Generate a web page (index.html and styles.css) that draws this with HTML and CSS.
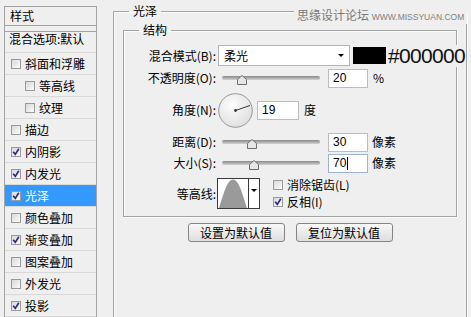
FILE: index.html
```html
<!DOCTYPE html>
<html lang="zh">
<head>
    <meta charset="UTF-8" />
    <title>图层样式 - 光泽</title>
    <link rel="stylesheet" href="styles.css">
</head>
<body>
<div class="page">
    <!-- style list on the left -->
    <div class="style-list">
        <div class="list-head">样式</div>
        <div class="list-blend">混合选项:默认</div>
        <div class="item"><span class="cb"></span>斜面和浮雕</div>
        <div class="item sub"><span class="cb"></span>等高线</div>
        <div class="item sub"><span class="cb"></span>纹理</div>
        <div class="item"><span class="cb"></span>描边</div>
        <div class="item"><span class="cb checked"><svg viewBox="0 0 10 10"><path d="M2.2 4.8 L4.3 7.4 L7.8 1.8"/></svg></span>内阴影</div>
        <div class="item"><span class="cb checked"><svg viewBox="0 0 10 10"><path d="M2.2 4.8 L4.3 7.4 L7.8 1.8"/></svg></span>内发光</div>
        <div class="item on"><span class="cb checked"><svg viewBox="0 0 10 10"><path d="M2.2 4.8 L4.3 7.4 L7.8 1.8"/></svg></span>光泽</div>
        <div class="item"><span class="cb"></span>颜色叠加</div>
        <div class="item"><span class="cb checked"><svg viewBox="0 0 10 10"><path d="M2.2 4.8 L4.3 7.4 L7.8 1.8"/></svg></span>渐变叠加</div>
        <div class="item"><span class="cb"></span>图案叠加</div>
        <div class="item"><span class="cb"></span>外发光</div>
        <div class="item"><span class="cb checked"><svg viewBox="0 0 10 10"><path d="M2.2 4.8 L4.3 7.4 L7.8 1.8"/></svg></span>投影</div>
    </div>

    <!-- satin settings -->
    <div class="panel">
        <fieldset class="group outer">
            <legend>光泽</legend>
            <fieldset class="group inner">
                <legend>结构</legend>

                <div class="row row-blend">
                    <span class="lbl">混合模式(B):</span>
                    <div class="select">柔光<span class="caret"></span></div>
                    <span class="swatch"></span>
                    <span class="hex">#000000</span>
                </div>

                <div class="row row-opacity">
                    <span class="lbl">不透明度(O):</span>
                    <div class="slider"><svg class="thumb" style="left:15px" viewBox="0 0 10 10"><path d="M5 0.5 L9.5 4.5 L9.5 9.5 L0.5 9.5 L0.5 4.5 Z"/></svg></div>
                    <span class="num">20</span>
                    <span class="unit">%</span>
                </div>

                <div class="row row-angle">
                    <span class="lbl">角度(N):</span>
                    <svg class="dial" viewBox="0 0 35 35">
                        <defs>
                            <radialGradient id="dialFill" cx="40%" cy="35%" r="70%">
                                <stop offset="0" stop-color="#fdfdfd"/>
                                <stop offset="1" stop-color="#dedede"/>
                            </radialGradient>
                        </defs>
                        <circle cx="17.5" cy="17.5" r="16.8" fill="url(#dialFill)" stroke="#8e8e8e" stroke-width="0.9"/>
                        <line x1="17.5" y1="17.5" x2="32" y2="12.5" stroke="#333" stroke-width="1"/>
                        <circle cx="17.5" cy="17.5" r="1.4" fill="#333"/>
                    </svg>
                    <span class="num wide">19</span>
                    <span class="unit">度</span>
                </div>

                <div class="row row-distance">
                    <span class="lbl">距离(D):</span>
                    <div class="slider"><svg class="thumb" style="left:25px" viewBox="0 0 10 10"><path d="M5 0.5 L9.5 4.5 L9.5 9.5 L0.5 9.5 L0.5 4.5 Z"/></svg></div>
                    <span class="num">30</span>
                    <span class="unit px">像素</span>
                </div>

                <div class="row row-size">
                    <span class="lbl">大小(S):</span>
                    <div class="slider"><svg class="thumb" style="left:27px" viewBox="0 0 10 10"><path d="M5 0.5 L9.5 4.5 L9.5 9.5 L0.5 9.5 L0.5 4.5 Z"/></svg></div>
                    <span class="num focus">70<i class="text-caret"></i></span>
                    <span class="unit px">像素</span>
                </div>

                <div class="row row-contour">
                    <span class="lbl">等高线:</span>
                    <div class="contour">
                        <svg class="curve" viewBox="0 0 30 29" preserveAspectRatio="none">
                            <path d="M1 29 C6 14 9 1 15 0.5 C21 1 24 14 29 29 Z" fill="#9a9a9a"/>
                        </svg>
                        <span class="contour-arrow"><span class="caret"></span></span>
                    </div>
                    <div class="checks">
                        <div class="check"><span class="cb"></span>消除锯齿(L)</div>
                        <div class="check"><span class="cb checked"><svg viewBox="0 0 10 10"><path d="M2.2 4.8 L4.3 7.4 L7.8 1.8"/></svg></span>反相(I)</div>
                    </div>
                </div>
            </fieldset>

            <div class="actions">
                <button class="btn">设置为默认值</button>
                <button class="btn">复位为默认值</button>
            </div>
        </fieldset>

        <div class="watermark">思缘设计论坛 <span>WWW.MISSYUAN.COM</span></div>
    </div>
</div>
</body>
</html>
```

FILE: styles.css
```css
body {
    margin: 0;
    height: 317px;
    overflow: hidden;
    background-color: #efefef;
    color: #000;
    font-family: "Noto Sans CJK SC", "Liberation Sans", sans-serif;
    font-size: 12px;
    line-height: 14px;
}
.page {
    display: flex;
    align-items: flex-start;
}

/* left style list */
.style-list {
    width: 93px;
    height: 330px;
    margin: 6px 0 0 4px;
    box-sizing: border-box;
    border: 1px solid #a3a3a3;
    border-bottom: none;
}
.list-head {
    height: 18px;
    line-height: 18px;
    padding-left: 5px;
    border-bottom: 1px solid #a3a3a3;
}
.list-blend {
    height: 20px;
    margin-top: 5px;
    padding-left: 4px;
    line-height: 14px;
    border-top: 1px solid #a3a3a3;
    border-bottom: 1px solid #d8d8d8;
}
.item {
    height: 21px;
    display: flex;
    align-items: center;
    gap: 4px;
    padding-left: 6px;
    border-bottom: 1px solid #d8d8d8;
}
.item.sub {
    padding-left: 20px;
}
.item.on {
    background-color: #3399ff;
    color: #fff;
}
.cb {
    flex: none;
    width: 10px;
    height: 10px;
    box-sizing: border-box;
    border: 1px solid #9a9a9a;
    background: linear-gradient(135deg, #d9d9d9, #fbfbfb);
    display: inline-block;
    position: relative;
}
.cb svg {
    position: absolute;
    left: -1px;
    top: -1px;
    width: 10px;
    height: 10px;
}
.cb svg path {
    fill: none;
    stroke: #2a2a8c;
    stroke-width: 1.7;
}

/* right panel */
.panel {
    position: relative;
    margin-left: 16px;
    padding-top: 4px;
}
fieldset.group {
    margin: 0;
    min-width: 0;
    border: 1px solid #a3a3a3;
    box-shadow: inset 1px 1px 0 #fbfbfb, 1px 1px 0 #fbfbfb;
}
fieldset.group > legend {
    padding: 0 4px;
    font-size: 12px;
    line-height: 14px;
}
.outer {
    width: 354px;
    height: 330px;
    box-sizing: border-box;
    padding: 5px 9px 0 9px;
}
.outer > legend {
    margin-left: 6px;
}
.inner {
    padding: 8px 0 7px 0;
}
.inner > legend {
    margin-left: 15px;
}

.row {
    display: flex;
    align-items: center;
}
.lbl {
    flex: none;
    width: 94px;
    padding-right: 2px;
    box-sizing: border-box;
    text-align: right;
}
.row-blend { height: 21px; }
.row-opacity { height: 20px; margin-top: 2px; }
.row-angle { height: 36px; margin-top: 4px; }
.row-distance { height: 20px; margin-top: 4px; }
.row-size { height: 20px; margin-top: 1px; }
.row-contour { height: 31px; margin-top: 5px; }

.select {
    flex: none;
    width: 132px;
    height: 21px;
    box-sizing: border-box;
    border: 1px solid #b5b5b5;
    background-color: #fff;
    display: flex;
    align-items: center;
    justify-content: space-between;
    padding: 0 5px 0 5px;
}
.caret {
    width: 0;
    height: 0;
    border-left: 3px solid transparent;
    border-right: 3px solid transparent;
    border-top: 3px solid #000;
}
.swatch {
    flex: none;
    width: 33px;
    height: 17px;
    margin-left: 3px;
    background-color: #000;
}
.hex {
    flex: none;
    position: relative;
    margin-left: 2px;
    padding-right: 1px;
    background-color: #efefef;
    font-family: "Liberation Sans", sans-serif;
    font-size: 21px;
    line-height: 22px;
    letter-spacing: -0.7px;
    color: #111;
    white-space: nowrap;
}

.slider {
    position: relative;
    flex: none;
    width: 98px;
    height: 4px;
    margin-left: 4px;
    border-radius: 2px;
    background: linear-gradient(#878787, #d2d2d2);
}
.thumb {
    position: absolute;
    top: -1px;
    width: 10px;
    height: 10px;
}
.thumb path {
    fill: #e6e6e6;
    stroke: #6f6f6f;
    stroke-width: 1;
}
.num {
    flex: none;
    width: 40px;
    height: 19px;
    box-sizing: border-box;
    margin-left: 8px;
    padding-left: 4px;
    border: 1px solid #bdbdbd;
    background-color: #fff;
    font-family: "Liberation Sans", sans-serif;
    line-height: 17px;
    display: flex;
    align-items: center;
}
.num.wide {
    width: 42px;
    margin-left: 4px;
}
.num.focus {
    border-color: #9db4d6;
}
.text-caret {
    width: 1px;
    height: 13px;
    margin-left: 1px;
    background-color: #000;
}
.unit {
    margin-left: 5px;
}
.unit.px {
    margin-left: 4px;
}
.dial {
    flex: none;
    width: 35px;
    height: 35px;
}

.contour {
    flex: none;
    width: 43px;
    height: 31px;
    margin-left: -1px;
    box-sizing: border-box;
    border: 1px solid #3a3a3a;
    background-color: #fff;
    display: flex;
}
.curve {
    width: 30px;
    height: 29px;
}
.contour-arrow {
    flex: 1;
    border-left: 1px solid #3a3a3a;
    display: flex;
    justify-content: center;
    padding-top: 10px;
    box-sizing: border-box;
}
.checks {
    margin-left: 13px;
    display: flex;
    flex-direction: column;
}
.check {
    height: 17px;
    display: flex;
    align-items: center;
    gap: 4px;
}

.actions {
    display: flex;
    justify-content: center;
    gap: 11px;
    margin-top: 6px;
}
.btn {
    width: 97px;
    height: 19px;
    padding: 0;
    border: 1px solid #858585;
    border-radius: 3px;
    background: linear-gradient(#f8f8f8, #dedede);
    font-family: "Noto Sans CJK SC", sans-serif;
    font-size: 12px;
    line-height: 16px;
    color: #000;
}

.watermark {
    position: absolute;
    top: 8px;
    left: 181px;
    padding: 0 3px;
    background-color: #efefef;
    color: #7a7a7a;
    font-size: 12px;
    line-height: 14px;
    white-space: nowrap;
}
.watermark span {
    font-family: "Liberation Sans", sans-serif;
    font-size: 8.5px;
    color: #808080;
}
```
